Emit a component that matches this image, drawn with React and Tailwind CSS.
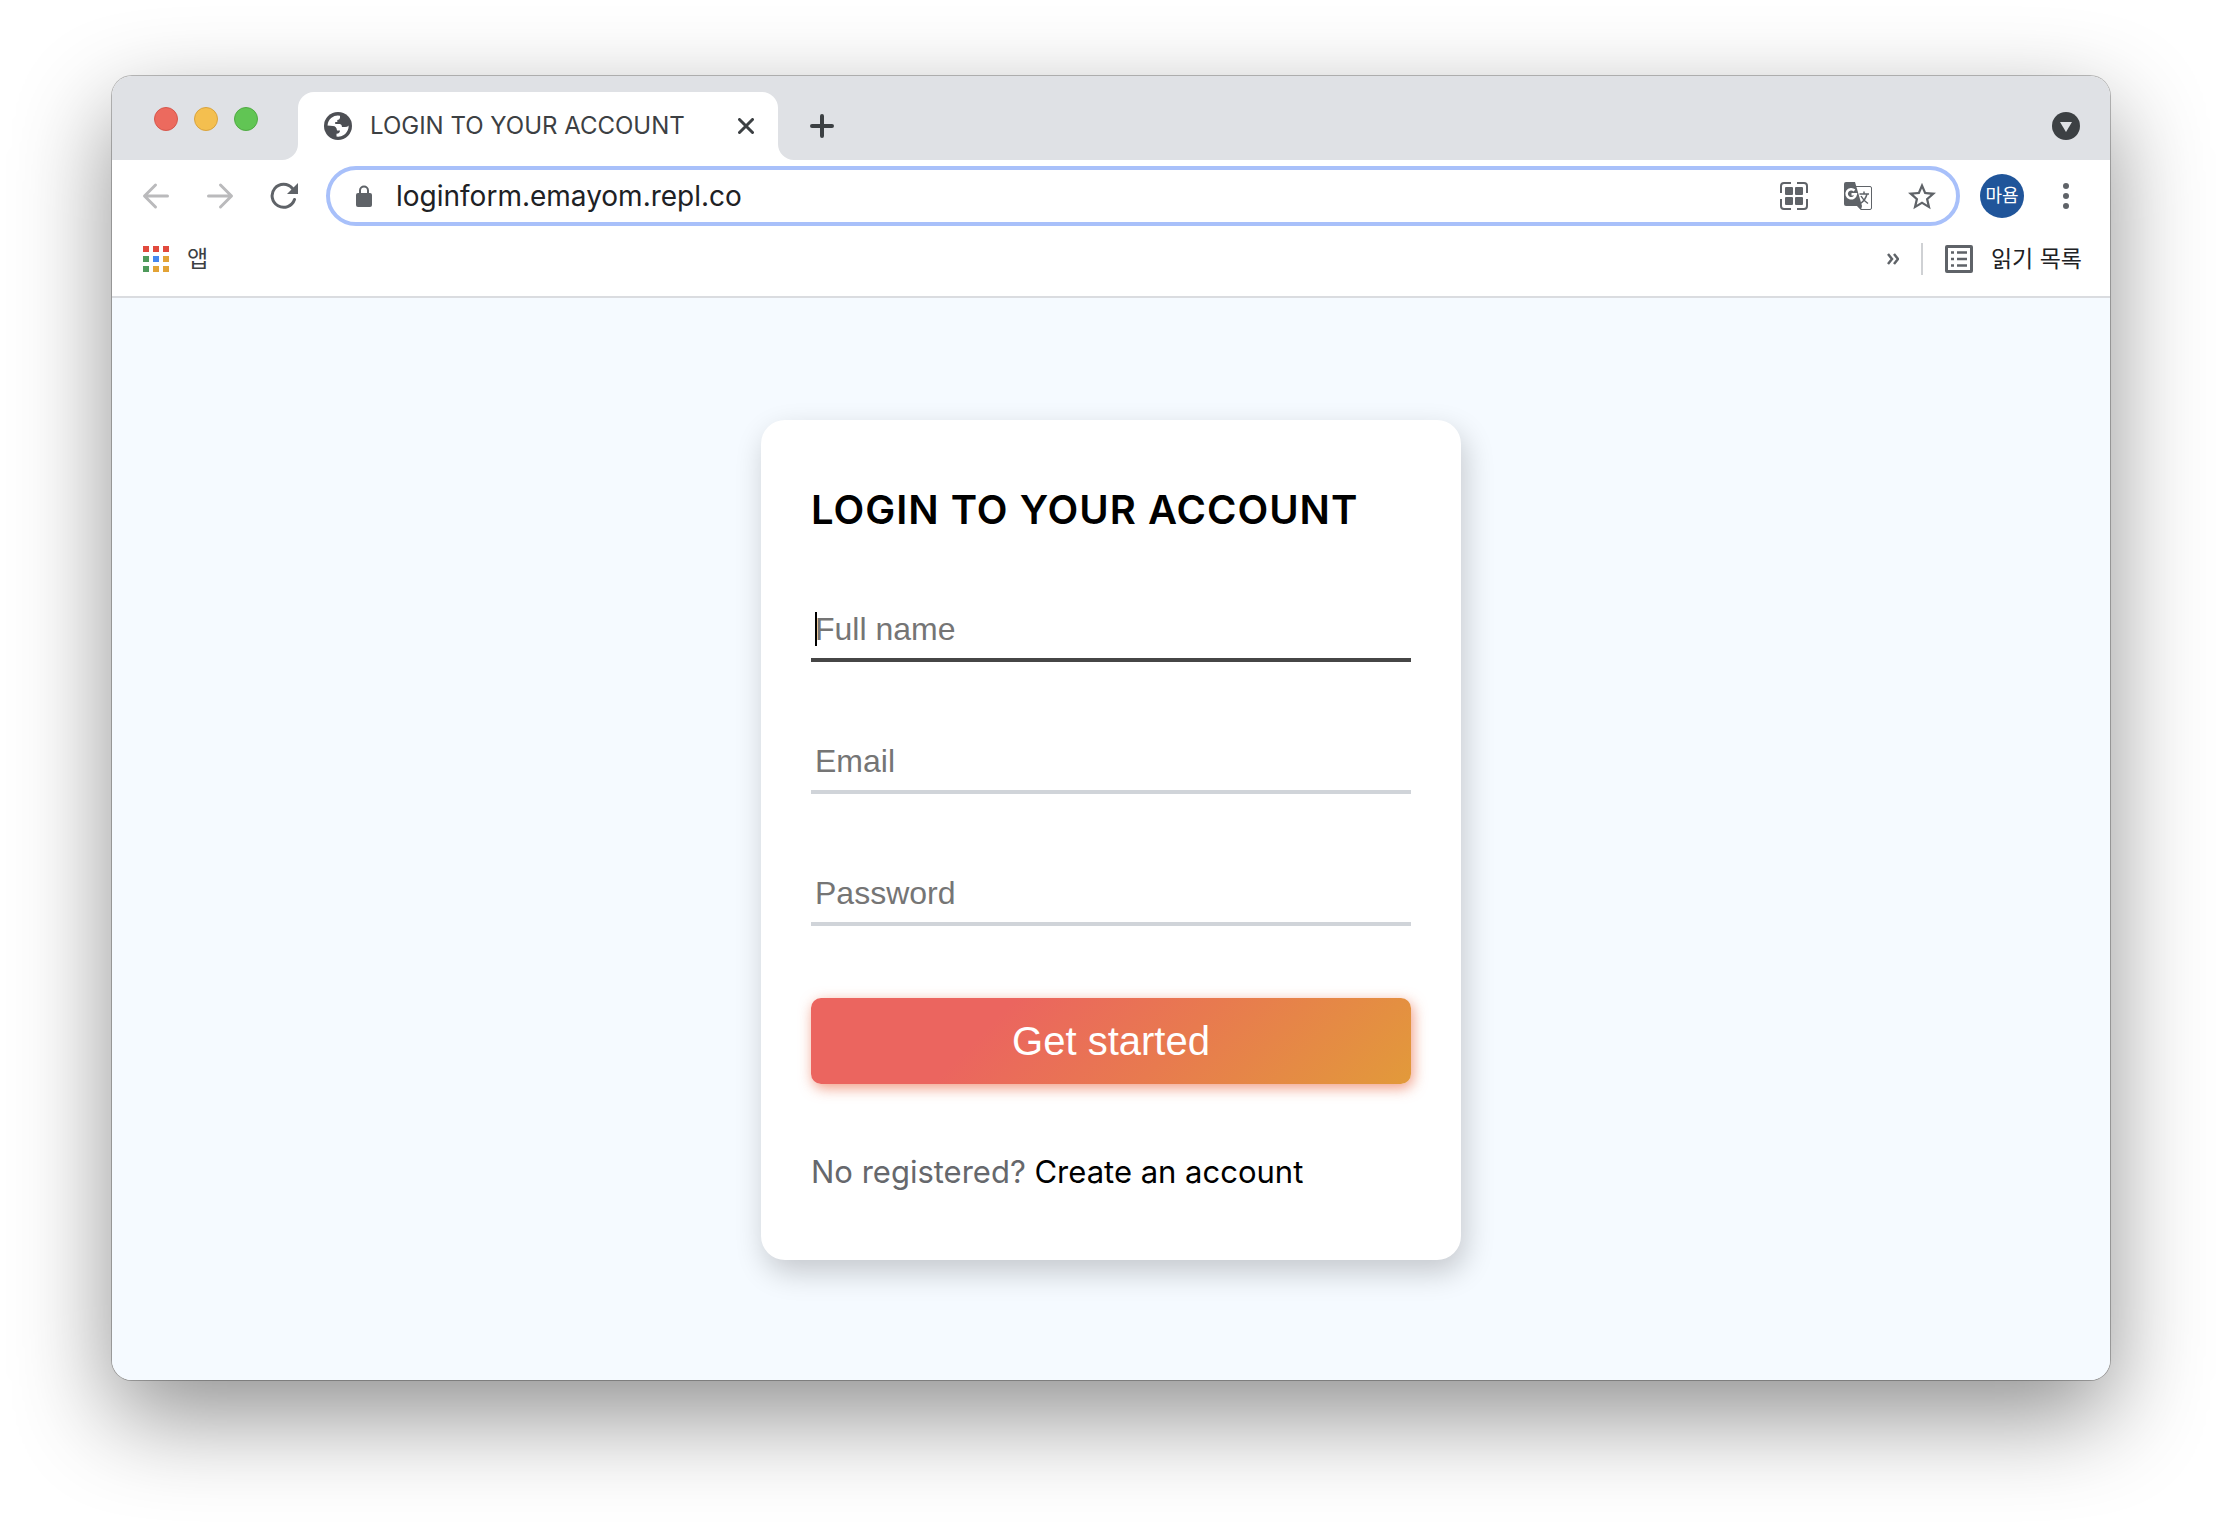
import React, { useState } from 'react';

const toolbarIcon = 'flex h-11 w-11 items-center justify-center';

function Globe() {
  return (
    <svg viewBox="0 0 28 28" className="h-7 w-7 shrink-0">
      <circle cx="14" cy="14" r="14" fill="#4d4f54" />
      <path
        d="M3.500 13.500A10.500 10.500 0 0 1 16 3.700V6Q15.500 7.800 13.300 8V10H11.200V12H16Q18 12.300 18 15H21Q23.500 15 24.600 13.500A10.500 10.500 0 0 1 12.500 24.500V21.700Q16 21.500 16 18.500H13Q12.500 14.200 9 14Z"
        fill="#fff"
      />
    </svg>
  );
}

function TabFlare({ flip }) {
  return (
    <svg viewBox="0 0 16 16" className={`h-4 w-4 self-end ${flip ? '-scale-x-100' : ''}`}>
      <path d="M16 0V16H0A16 16 0 0 0 16 0Z" fill="#fff" />
    </svg>
  );
}

function TabStrip() {
  return (
    <div className="flex h-[84px] bg-[#dfe1e5] pr-[30px]">
      <div className="flex items-center gap-4 pt-[2px] pr-10 pl-[42px]">
        <span className="h-6 w-6 rounded-full border border-[#d6574c] bg-[#ec6a5e]" />
        <span className="h-6 w-6 rounded-full border border-[#d9a33d] bg-[#f4bf4f]" />
        <span className="h-6 w-6 rounded-full border border-[#50aa43] bg-[#61c554]" />
      </div>
      <div className="-ml-4 flex items-end">
        <TabFlare />
        <div className="flex h-[68px] w-[480px] items-center rounded-t-2xl bg-white pr-6 pl-[26px]">
          <Globe />
          <span className="ml-[18px] flex-1 truncate text-2xl text-[#3c4043]">LOGIN TO YOUR ACCOUNT</span>
          <button type="button" aria-label="Close tab">
            <svg viewBox="0 0 16 16" className="h-4 w-4" stroke="#3c4043" strokeWidth="3" strokeLinecap="round">
              <path d="M1.500 1.500L14.500 14.500M14.500 1.500L1.500 14.500" />
            </svg>
          </button>
        </div>
        <TabFlare flip />
      </div>
      <div className="flex flex-1 items-center justify-between pt-4 pl-4">
        <button type="button" aria-label="New tab">
          <svg viewBox="0 0 24 24" className="h-6 w-6" stroke="#3c4043" strokeWidth="4" strokeLinecap="round">
            <path d="M12 2V22M2 12H22" />
          </svg>
        </button>
        <button type="button" aria-label="Search tabs">
          <svg viewBox="0 0 28 28" className="h-7 w-7">
            <circle cx="14" cy="14" r="14" fill="#3c4043" />
            <path d="M8 10H20L14 20Z" fill="#dfe1e5" />
          </svg>
        </button>
      </div>
    </div>
  );
}

function Toolbar() {
  const [url, setUrl] = useState('loginform.emayom.repl.co');

  return (
    <div className="flex h-[72px] items-center px-[22px]">
      <button type="button" aria-label="Back" className={toolbarIcon}>
        <svg viewBox="0 0 28 28" className="h-7 w-7" fill="none" stroke="#bababc" strokeWidth="3" strokeLinecap="round" strokeLinejoin="round">
          <path d="M25.500 14H3M13.500 3L2.500 14L13.500 25" />
        </svg>
      </button>
      <button type="button" aria-label="Forward" className={`${toolbarIcon} ml-5`}>
        <svg viewBox="0 0 28 28" className="h-7 w-7" fill="none" stroke="#bababc" strokeWidth="3" strokeLinecap="round" strokeLinejoin="round">
          <path d="M2.500 14H25M14.500 3L25.500 14L14.500 25" />
        </svg>
      </button>
      <button type="button" aria-label="Reload" className={`${toolbarIcon} ml-5`}>
        <svg viewBox="0 0 28 28" className="h-7 w-7">
          <path d="M24.500 17.500A11.500 11.500 0 1 1 22.500 6.500" fill="none" stroke="#5f6368" strokeWidth="3" strokeLinecap="round" />
          <path d="M28 1V12H17Z" fill="#5f6368" />
        </svg>
      </button>

      <div className="ml-5 flex h-[60px] flex-1 items-center rounded-full border-4 border-[#a8c0fa] pr-3 pl-[26px]">
        <svg viewBox="0 0 16 22" className="h-[22px] w-4 shrink-0">
          <path d="M4 9V5.500A4 4 0 0 1 12 5.500V9" fill="none" stroke="#5f6368" strokeWidth="2" />
          <rect x="0" y="8" width="16" height="14" rx="2" fill="#5f6368" />
        </svg>
        <input
          type="text"
          aria-label="Address"
          value={url}
          onChange={(e) => setUrl(e.target.value)}
          className="ml-6 min-w-0 flex-1 text-[28px] text-[#202124] outline-none"
        />
        <div className="flex items-center gap-5">
          <button type="button" aria-label="QR code" className={toolbarIcon}>
            <svg viewBox="0 0 28 28" className="h-7 w-7">
              <path d="M1 11V4Q1 1 4 1H11M17 1H24Q27 1 27 4V11M27 17V24Q27 27 24 27H17M11 27H4Q1 27 1 24V17" fill="none" stroke="#5f6368" strokeWidth="2" />
              <g fill="#5f6368">
                <rect x="5" y="5" width="8" height="8" rx="1" />
                <rect x="15" y="5" width="8" height="8" rx="1" />
                <rect x="5" y="15" width="8" height="8" rx="1" />
                <rect x="15" y="15" width="8" height="8" rx="1" />
              </g>
            </svg>
          </button>
          <button type="button" aria-label="Translate" className={toolbarIcon}>
            <svg viewBox="0 0 28 28" className="h-7 w-7">
              <path d="M12 4.500H26Q27.500 4.500 27.500 6V26Q27.500 27.500 26 27.500H17L13 23" fill="#fff" stroke="#5f6368" strokeWidth="1" />
              <path d="M2 0H11L18 24H2Q0 24 0 22V2Q0 0 2 0Z" fill="#5f6368" />
              <path d="M13 24H18L17 28Z" fill="#5f6368" />
              <path d="M10.500 8.500A4.600 4.600 0 1 0 11.800 12.300H7.500" fill="none" stroke="#fff" strokeWidth="2.500" />
              <path d="M15.500 12H25M20 9.500V12M23 12Q21.500 18 16.500 21.500M17 14Q19.500 18.500 24 21.500" fill="none" stroke="#5f6368" strokeWidth="1.500" />
            </svg>
          </button>
          <button type="button" aria-label="Bookmark this tab" className={toolbarIcon}>
            <svg viewBox="2 2 20 19" className="h-7 w-7" fill="#5f6368">
              <path d="M22 9.240l-7.190-.620L12 2 9.190 8.630 2 9.240l5.460 4.730L5.820 21 12 17.270 18.180 21l-1.630-7.030L22 9.240zM12 15.400l-3.760 2.270 1-4.280-3.320-2.880 4.380-.380L12 6.100l1.710 4.040 4.380.380-3.320 2.880 1 4.280L12 15.400z" />
            </svg>
          </button>
        </div>
      </div>

      <button type="button" className="ml-5 h-11 w-11 rounded-full bg-[#20559a] text-lg text-white">
        마욤
      </button>
      <button type="button" aria-label="Menu" className={`${toolbarIcon} ml-5`}>
        <svg viewBox="0 0 6 26" className="h-[26px] w-[6px]" fill="#5f6368">
          <circle cx="3" cy="3" r="3" />
          <circle cx="3" cy="13" r="3" />
          <circle cx="3" cy="23" r="3" />
        </svg>
      </button>
    </div>
  );
}

const appDots = [
  'bg-[#e14a3d]', 'bg-[#e14a3d]', 'bg-[#e14a3d]',
  'bg-[#4f9a5b]', 'bg-[#4587f0]', 'bg-[#e3a336]',
  'bg-[#4f9a5b]', 'bg-[#e3a336]', 'bg-[#e3a336]',
];

function BookmarksBar() {
  return (
    <div className="border-b-2 border-[#dadce0] pb-[10px]">
      <div className="flex h-[54px] items-center justify-between pr-7 pl-[31px] text-[23px]">
        <a href="#apps" className="flex items-center gap-[18px] text-[#3c4043]">
          <span className="grid grid-cols-3 gap-1">
            {appDots.map((color, index) => (
              <span key={index} className={`h-[6px] w-[6px] ${color}`} />
            ))}
          </span>
          앱
        </a>
        <div className="flex items-center">
          <button type="button" aria-label="More bookmarks">
            <svg viewBox="0 0 12 12" className="h-3 w-3" fill="none" stroke="#5f6368" strokeWidth="2.500">
              <path d="M1 1L5 6L1 11M7 1L11 6L7 11" />
            </svg>
          </button>
          <span className="ml-[22px] h-8 w-[2px] bg-[#cfd1d4]" />
          <button type="button" className="ml-[22px] flex items-center gap-[18px] text-[#202124]">
            <svg viewBox="0 0 28 28" className="h-7 w-7">
              <rect x="1.500" y="1.500" width="25" height="25" rx="0.500" fill="none" stroke="#5f6368" strokeWidth="3" />
              <path d="M6 7.500H9M6 14H9M6 20.500H9M12 7.500H22M12 14H22M12 20.500H22" stroke="#5f6368" strokeWidth="2.500" />
            </svg>
            읽기 목록
          </button>
        </div>
      </div>
    </div>
  );
}

const fields = [
  { name: 'fullname', type: 'text', label: 'Full name' },
  { name: 'email', type: 'email', label: 'Email' },
  { name: 'password', type: 'password', label: 'Password' },
];

function LoginForm() {
  const [values, setValues] = useState({ fullname: '', email: '', password: '' });

  const handleChange = (e) => {
    setValues({ ...values, [e.target.name]: e.target.value });
  };

  const handleSubmit = (e) => {
    e.preventDefault();
  };

  return (
    <form
      onSubmit={handleSubmit}
      className="w-[700px] rounded-3xl bg-white px-[50px] py-16 shadow-[4px_12px_30px_rgba(0,0,0,0.2)]"
    >
      <h1 className="text-[40px] leading-[52px] font-semibold tracking-wide text-black">LOGIN TO YOUR ACCOUNT</h1>

      <div className="mt-[62px] flex flex-col gap-[68px]">
        {fields.map(({ name, type, label }, index) => (
          <div key={name} className="relative">
            <input
              type={type}
              name={name}
              aria-label={label}
              placeholder={label}
              value={values[name]}
              onChange={handleChange}
              className={`block h-16 w-full border-b-4 px-1 pt-[2px] font-['Liberation_Sans',sans-serif] text-[32px] outline-none placeholder:text-[#757575] ${
                index === 0 ? 'border-[#464646]' : 'border-[#d0d4d9]'
              }`}
            />
            {index === 0 && <span className="absolute top-[14px] left-1 h-[34px] w-[2px] bg-black" />}
          </div>
        ))}
      </div>

      <button
        type="submit"
        className="mt-[72px] block h-[86px] w-full rounded-[10px] bg-[linear-gradient(135deg,#eb655f_30%,#e87a4f_60%,#e29a3a)] font-['Liberation_Sans',sans-serif] text-[40px] text-white shadow-[2px_4px_14px_rgba(232,90,50,0.6)]"
      >
        Get started
      </button>

      <p className="mt-16 text-[31px] leading-[48px] text-[#66686c]">
        No registered? <a href="#signup" className="text-black">Create an account</a>
      </p>
    </form>
  );
}

function App() {
  return (
    <div className="flex min-h-screen bg-white px-28 pt-[76px] pb-[148px] font-['Inter','Noto_Sans_CJK_KR',sans-serif]">
      <div className="flex flex-1 flex-col overflow-hidden rounded-[20px] bg-white shadow-[0_0_0_1px_rgba(0,0,0,0.25),0_36px_96px_rgba(0,0,0,0.44)]">
        <TabStrip />
        <Toolbar />
        <BookmarksBar />
        <main className="flex flex-1 items-center justify-center bg-[#f5faff] pt-[42px] pb-10">
          <LoginForm />
        </main>
      </div>
    </div>
  );
}

export default App;
